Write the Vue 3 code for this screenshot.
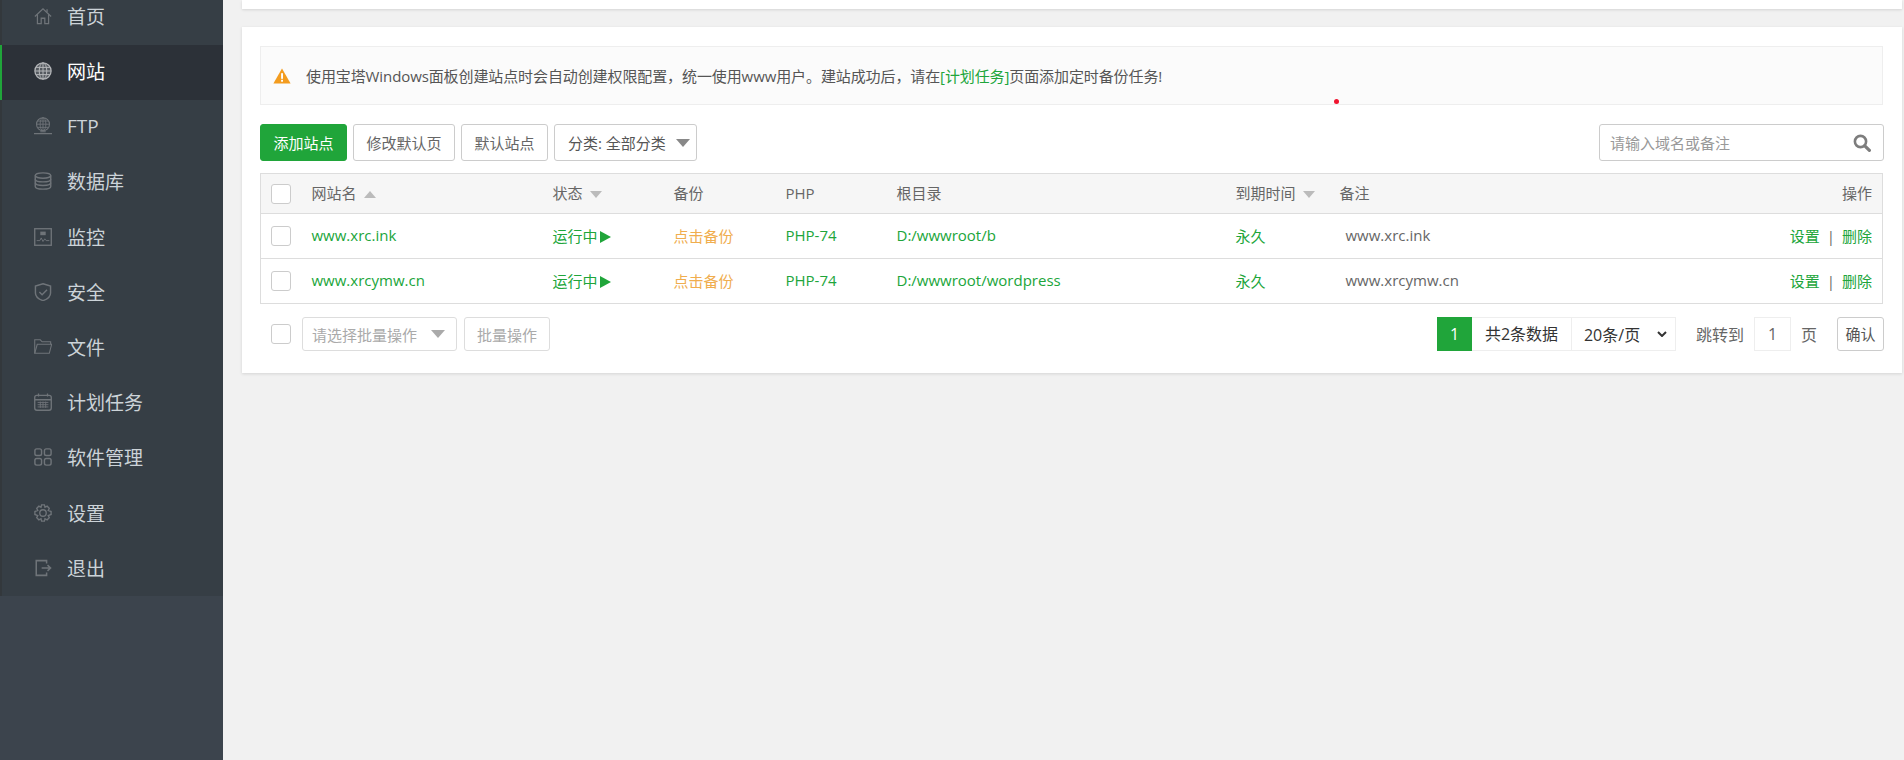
<template>
  <div class="page">
    <aside class="sidebar">
      <ul class="menu">
        <li v-for="item in menu" :key="item.label" class="menu-item" :class="{ active: item.active }">
          <svg class="menu-icon" viewBox="0 0 20 20" fill="none" stroke="currentColor" stroke-width="1.4" v-html="item.icon"></svg>
          <span>{{ item.label }}</span>
        </li>
      </ul>
    </aside>

    <main class="main">
      <div class="top-card"></div>

      <section class="card">
        <div class="notice">
          <svg class="notice-icon" viewBox="0 0 18 16">
            <path d="M9 0.5 L17.6 15.5 H0.4 Z" fill="#f39c1f" />
            <rect x="8.1" y="5.2" width="1.9" height="5.6" fill="#fff" />
            <rect x="8.1" y="11.8" width="1.9" height="1.9" fill="#fff" />
          </svg>
          <span>使用宝塔Windows面板创建站点时会自动创建权限配置，统一使用www用户。建站成功后，请在<a class="link">[计划任务]</a>页面添加定时备份任务!</span>
        </div>

        <div class="toolbar">
          <button type="button" class="btn btn-green">添加站点</button>
          <button type="button" class="btn btn-modify">修改默认页</button>
          <button type="button" class="btn btn-default-site">默认站点</button>
          <div class="btn category">
            <span>分类: 全部分类</span>
            <i class="caret caret-big"></i>
          </div>
          <div class="search">
            <span class="search-text">请输入域名或备注</span>
            <svg class="search-icon" viewBox="0 0 18 18" fill="none" stroke="#7d7d7d">
              <circle cx="7.5" cy="7.5" r="5.6" stroke-width="2.6" />
              <path d="M11.8 11.8 L16.4 16.4" stroke-width="3.2" stroke-linecap="round" />
            </svg>
          </div>
        </div>

        <table class="table">
          <colgroup>
            <col style="width: 41px" />
            <col style="width: 241px" />
            <col style="width: 121px" />
            <col style="width: 112px" />
            <col style="width: 111px" />
            <col style="width: 339px" />
            <col style="width: 104px" />
            <col />
            <col style="width: 120px" />
          </colgroup>
          <thead>
            <tr>
              <th><i class="check"></i></th>
              <th>网站名<i class="sort up"></i></th>
              <th>状态<i class="sort"></i></th>
              <th>备份</th>
              <th>PHP</th>
              <th>根目录</th>
              <th>到期时间<i class="sort"></i></th>
              <th>备注</th>
              <th class="right">操作</th>
            </tr>
          </thead>
          <tbody>
            <tr v-for="site in sites" :key="site.name">
              <td><i class="check"></i></td>
              <td class="green">{{ site.name }}</td>
              <td class="green">运行中<i class="play"></i></td>
              <td class="orange">点击备份</td>
              <td class="green">PHP-74</td>
              <td class="green">{{ site.path }}</td>
              <td class="green">永久</td>
              <td class="remark">{{ site.name }}</td>
              <td class="right"><a class="link">设置</a><span class="sep">|</span><a class="link">删除</a></td>
            </tr>
          </tbody>
        </table>

        <div class="footer">
          <i class="check"></i>
          <div class="batch-select">
            <span>请选择批量操作</span>
            <i class="caret"></i>
          </div>
          <div class="batch-btn">批量操作</div>
          <div class="pager">
            <span class="page-current">1</span>
            <span class="page-total">共2条数据</span>
            <div class="page-size">
              <span>20条/页</span>
              <svg class="chevron" viewBox="0 0 10 6" fill="none" stroke="#333" stroke-width="2"><path d="M1 1 L5 5 L9 1" /></svg>
            </div>
            <span class="jump-label">跳转到</span>
            <span class="jump-input">1</span>
            <span class="jump-unit">页</span>
            <span class="jump-btn">确认</span>
          </div>
        </div>

        <i class="red-dot"></i>
      </section>
    </main>
  </div>
</template>

<script setup>
const menu = [
  { label: '首页', icon: '<path d="M1 10.5 L10 2 L19 10.5" /><path d="M3.8 8 V18.5 H8 V12.5 H12 V18.5 H16.2 V8" /><path d="M14.5 2.5 V5.5" />' },
  { label: '网站', active: true, icon: '<circle cx="10" cy="10" r="9" fill="currentColor" fill-opacity=".3" /><ellipse cx="10" cy="10" rx="4.2" ry="9" stroke-width="1.1" /><path d="M10 1 V19 M1 10 H19 M2.4 6 H17.6 M2.4 14 H17.6" stroke-width="1.1" />' },
  { label: 'FTP', icon: '<circle cx="10" cy="8" r="7.2" stroke-width="1.2" /><ellipse cx="10" cy="8" rx="3.2" ry="7.2" stroke-width="1" /><path d="M10 1 V15 M3 8 H17 M4 4.5 H16 M4 11.5 H16" stroke-width="1" /><path d="M0 18.4 H20 M7 16.4 H13" stroke-width="1.3" />' },
  { label: '数据库', icon: '<ellipse cx="10" cy="4" rx="8.6" ry="3" stroke-width="1.6" /><path d="M1.4 4 V16 C1.4 17.7 5.2 19 10 19 C14.8 19 18.6 17.7 18.6 16 V4" stroke-width="1.6" /><path d="M1.4 8 C1.4 9.7 5.2 11 10 11 C14.8 11 18.6 9.7 18.6 8 M1.4 12 C1.4 13.7 5.2 15 10 15 C14.8 15 18.6 13.7 18.6 12" stroke-width="1.6" />' },
  { label: '监控', icon: '<rect x="0.8" y="0.8" width="18.4" height="18.4" stroke-width="1.5" /><path d="M3 14 H6.5 L8 11 L10 15 L12 12 L13.5 14 H17" stroke-width="1" /><rect x="7" y="4" width="6" height="4" fill="currentColor" stroke="none" />' },
  { label: '安全', icon: '<path d="M10 0.8 L18.4 3.4 V11 C18.4 15 14 18.2 10 19.6 C6 18.2 1.6 15 1.6 11 V3.4 Z" stroke-width="1.6" /><path d="M6 10 L9 13 L14.5 7.5" stroke-width="1.6" />' },
  { label: '文件', icon: '<path d="M0.8 17 V2 H7 L9 4.2 H18.5 V7" stroke-width="1.2" /><path d="M0.8 17 H17 L19.6 7 H3.6 Z" stroke-width="1.2" />' },
  { label: '计划任务', icon: '<rect x="0.8" y="2.6" width="18.4" height="16.6" rx="2.4" stroke-width="1.5" /><path d="M5 0.6 V4 M15 0.6 V4 M1 7.5 H19" /><path d="M4 10.5 H16 M4 13 H16 M4 15.5 H16 M7 9.5 V16.5 M10 9.5 V16.5 M13 9.5 V16.5" stroke-width="1" />' },
  { label: '软件管理', icon: '<rect x="1" y="1" width="7.4" height="7.4" rx="2" stroke-width="1.6" /><rect x="11.6" y="1" width="7.4" height="7.4" rx="2" stroke-width="1.6" /><rect x="1" y="11.6" width="7.4" height="7.4" rx="2" stroke-width="1.6" /><rect x="11.6" y="11.6" width="7.4" height="7.4" rx="2" stroke-width="1.6" />' },
  { label: '设置', icon: '<path d="M8.4 1 H11.6 L12.2 3.6 L14.6 2.4 L17 4.8 L15.8 7.2 L19 8.4 V11.6 L15.8 12.8 L17 15.2 L14.6 17.6 L12.2 16.4 L11.6 19 H8.4 L7.8 16.4 L5.4 17.6 L3 15.2 L4.2 12.8 L1 11.6 V8.4 L4.2 7.2 L3 4.8 L5.4 2.4 L7.8 3.6 Z" stroke-width="1.5" /><circle cx="10" cy="10" r="3.6" stroke-width="1.5" />' },
  { label: '退出', icon: '<path d="M14 5 V1.8 H2.5 V18.2 H14 V15" stroke-width="1.7" /><path d="M8.5 10 H18 M15 6.8 L18.4 10 L15 13.2" stroke-width="1.7" />' },
]

const sites = [
  { name: 'www.xrc.ink', path: 'D:/wwwroot/b' },
  { name: 'www.xrcymw.cn', path: 'D:/wwwroot/wordpress' },
]
</script>

<style>
html,
body {
  margin: 0;
  background: #f1f1f1;
}
</style>

<style scoped>
.page {
  display: flex;
  height: 760px;
  overflow: hidden;
  font-family: "Open Sans", "Noto Sans CJK SC", sans-serif;
  color: #666;
  background: #f1f1f1;
}

.sidebar {
  width: 223px;
  flex: none;
  background: #3c444d;
}

.menu {
  list-style: none;
  height: 606.7px;
  margin: -10.7px 0 0;
  padding: 0;
  background: #363e45;
  box-shadow: inset 2px 0 0 #33383c;
}

.menu-item {
  display: flex;
  align-items: center;
  height: 55.2px;
  box-sizing: border-box;
  padding: 0 0 2px 34px;
  font-size: 19px;
  color: #ccd3d8;
}

.menu-item.active {
  background: #2c3138;
  color: #fff;
  box-shadow: inset 2px 0 0 #20a53a;
}

.menu-icon {
  width: 18px;
  height: 18px;
  margin-right: 15px;
  color: #6f7479;
}

.menu-item.active .menu-icon {
  color: #b4b6b9;
}

.main {
  flex: 1;
  min-width: 0;
  padding: 0 2px 0 19px;
}

.top-card {
  height: 9px;
  background: #fff;
  box-shadow: 0 1px 3px rgba(0, 0, 0, 0.12);
}

.card {
  position: relative;
  margin-top: 18px;
  height: 346px;
  box-sizing: border-box;
  padding: 19px 18px 0;
  background: #fff;
  box-shadow: 0 1px 3px rgba(0, 0, 0, 0.12);
}

.notice {
  display: flex;
  align-items: center;
  height: 59px;
  box-sizing: border-box;
  margin-right: 1px;
  padding-left: 12px;
  border: 1px solid #eee;
  background: #fbfbfb;
  font-size: 15px;
  letter-spacing: -0.1px;
  color: #555;
}

.notice-icon {
  width: 18px;
  height: 16px;
  margin-right: 15px;
}

.link {
  color: #20a53a;
}

.toolbar {
  display: flex;
  margin-top: 19px;
}

.btn {
  display: flex;
  align-items: center;
  justify-content: center;
  height: 37px;
  box-sizing: border-box;
  margin: 0 6px 0 0;
  padding: 0;
  border: 1px solid #ccc;
  border-radius: 3px;
  background: #fff;
  font: inherit;
  font-size: 15px;
  color: #666;
}

.btn-green {
  width: 87px;
  border-color: #20a53a;
  background: #20a53a;
  color: #fff;
}

.btn-modify {
  width: 102px;
}

.btn-default-site {
  width: 87px;
}

.category {
  width: 143px;
  justify-content: flex-start;
  padding-left: 13px;
  color: #555;
}

.caret {
  display: block;
  width: 0;
  height: 0;
  border-left: 7px solid transparent;
  border-right: 7px solid transparent;
  border-top: 8px solid #888;
}

.caret-big {
  margin-left: 10px;
}

.search {
  display: flex;
  align-items: center;
  justify-content: space-between;
  width: 285px;
  height: 37px;
  box-sizing: border-box;
  margin-left: auto;
  padding: 0 12px 0 10px;
  border: 1px solid #ccc;
  border-radius: 3px;
  font-size: 15px;
}

.search-text {
  color: #999;
}

.search-icon {
  width: 18px;
  height: 18px;
}

.table {
  width: 1623px;
  margin-top: 12px;
  border-collapse: collapse;
  table-layout: fixed;
  border: 1px solid #ddd;
  font-size: 15px;
}

.table th,
.table td {
  padding: 0 10px 2px;
  text-align: left;
  white-space: nowrap;
}

.table th:first-child,
.table td:first-child {
  padding: 1px 10px;
}

.table th {
  height: 37px;
  background: #f6f6f6;
  border-bottom: 1px solid #ddd;
  font-weight: 400;
  color: #666;
}

.table td {
  height: 42px;
  border-bottom: 1px solid #ddd;
}

.table th.right,
.table td.right {
  text-align: right;
}

.check {
  display: block;
  flex: none;
  width: 20px;
  height: 20px;
  box-sizing: border-box;
  border: 1px solid #ccc;
  border-radius: 3px;
  background: #fff;
}

.sort {
  display: inline-block;
  vertical-align: middle;
  margin-left: 7px;
  border-left: 6.5px solid transparent;
  border-right: 6.5px solid transparent;
  border-top: 7px solid #bbb;
}

.sort.up {
  border-top: 0;
  border-bottom: 7px solid #bbb;
}

.green {
  color: #20a53a;
}

.orange {
  color: #f0ad4e;
}

.remark {
  color: #666;
  text-indent: 6px;
}

.play {
  display: inline-block;
  vertical-align: -1px;
  margin-left: 2px;
  border-top: 6.5px solid transparent;
  border-bottom: 6.5px solid transparent;
  border-left: 11px solid #20a53a;
}

.sep {
  margin: 0 7px;
  color: #666;
}

.footer {
  display: flex;
  align-items: center;
  margin-top: 13px;
  padding-left: 11px;
}

.batch-select {
  display: flex;
  align-items: center;
  justify-content: space-between;
  width: 155px;
  height: 34px;
  box-sizing: border-box;
  margin-left: 11px;
  padding: 0 11px 0 9px;
  border: 1px solid #ddd;
  border-radius: 3px;
  font-size: 15px;
  color: #aaa;
}

.batch-select .caret {
  border-top-color: #aaa;
}

.batch-btn {
  display: flex;
  align-items: center;
  justify-content: center;
  width: 86px;
  height: 34px;
  box-sizing: border-box;
  margin-left: 7px;
  border: 1px solid #ddd;
  border-radius: 3px;
  font-size: 15px;
  color: #aaa;
}

.pager {
  display: flex;
  align-items: center;
  height: 34px;
  margin-left: auto;
  font-size: 16px;
}

.page-current {
  width: 35px;
  height: 34px;
  line-height: 34px;
  text-align: center;
  background: #20a53a;
  color: #fff;
}

.page-total {
  width: 100px;
  height: 34px;
  box-sizing: border-box;
  line-height: 32px;
  text-align: center;
  border: 1px solid #eee;
  border-left: 0;
  color: #333;
}

.page-size {
  display: flex;
  align-items: center;
  justify-content: space-between;
  width: 104px;
  height: 34px;
  box-sizing: border-box;
  padding: 0 8px 0 12px;
  border: 1px solid #eee;
  border-left: 0;
  color: #333;
}

.chevron {
  width: 10px;
  height: 6px;
}

.jump-label {
  margin-left: 20px;
}

.jump-input {
  width: 37px;
  height: 34px;
  box-sizing: border-box;
  margin-left: 10px;
  line-height: 32px;
  text-align: center;
  border: 1px solid #eee;
}

.jump-unit {
  margin-left: 10px;
}

.jump-btn {
  width: 47px;
  height: 34px;
  box-sizing: border-box;
  margin-left: 20px;
  line-height: 32px;
  text-align: center;
  border: 1px solid #ccc;
  border-radius: 3px;
  font-size: 15px;
  color: #555;
}

.red-dot {
  position: absolute;
  left: 1092px;
  top: 72px;
  width: 5px;
  height: 5px;
  border-radius: 50%;
  background: #f0142f;
}
</style>
